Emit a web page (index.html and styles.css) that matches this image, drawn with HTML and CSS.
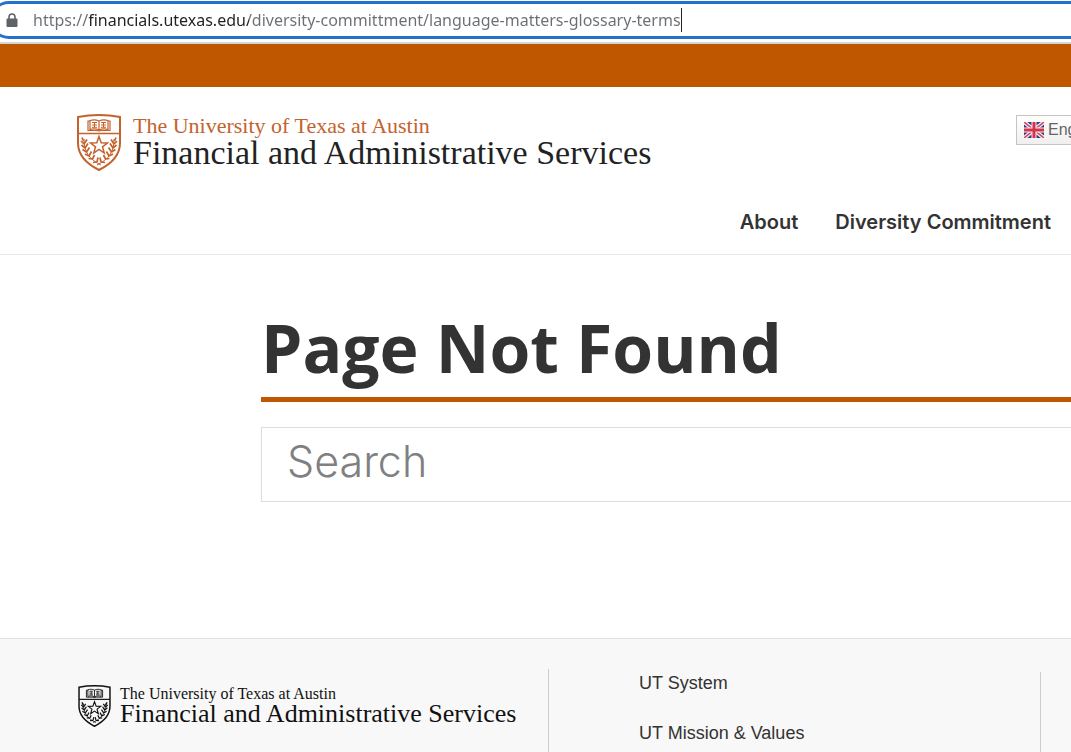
FILE: index.html
```html
<!DOCTYPE html>
<html lang="en">
<head>
<meta charset="utf-8">
<meta name="viewport" content="width=device-width, initial-scale=1">
<title>Page Not Found</title>
<link rel="stylesheet" href="styles.css">
</head>
<body>
<svg class="defs" aria-hidden="true">
  <symbol id="crest" viewBox="0 0 44 57">
    <g fill="none" stroke="currentColor">
      <path stroke-width="2" d="M1 3Q11 1 22 1T43 3V29C43 42 34 50 22 56C10 50 1 42 1 29Z"/>
      <path stroke-width="1.6" d="M1 19.5H43"/>
      <path stroke-width="1.2" d="M22 7C19 5.500 16 5.500 13 6.500V15.500C16 14.500 19 14.500 22 16C25 14.500 28 14.500 31 15.500V6.500C28 5.500 25 5.500 22 7V16M13 7H11V16.500H19L22 17L25 16.500H33V7H31"/>
      <path stroke-width="1" d="M15 8.500H20M15 11H20M15 13.300H20M24 8.500H29M24 11H29M24 13.300H29M17.500 8V13M26.500 8V13"/>
      <path stroke-width="1.500" d="M22 22.500L24.200 28.800L30.500 29L25.500 32.800L27.200 39L22 35.400L16.800 39L18.500 32.800L13.500 29L19.800 28.800Z"/>
      <path stroke-width="1" d="M7 25C7 38 12 45 24 51M37 25C37 38 32 45 20 51"/>
      <g stroke-width="1.700">
        <path d="M6.500 27L5 23.500M7 30L4 27M7 30L10 25.500M8 34L4.500 31M8 34L11 29.500M9.500 38L5.500 35.500M9.500 38L12.500 33.500M12 42L8 40M12 42L14.500 37.500M15.500 45L11.500 44.500M15.500 45L17.500 41M20 48L16 48.500M20 48L21 43.500"/>
        <path d="M37.500 27L39 23.500M37 30L40 27M37 30L34 25.500M36 34L39.500 31M36 34L33 29.500M34.500 38L38.500 35.500M34.500 38L31.500 33.500M32 42L36 40M32 42L29.500 37.500M28.500 45L32.500 44.500M28.500 45L26.500 41M24 48L28 48.500M24 48L23 43.500"/>
      </g>
    </g>
  </symbol>
</svg>

<div class="browser-bar">
  <div class="address">
    <svg class="lock" viewBox="0 0 12 15" aria-hidden="true"><path d="M3 6V4a3 3 0 0 1 6 0V6" fill="none" stroke="#5f6368" stroke-width="1.600"/><rect x=".5" y="5.500" width="11" height="8.500" rx="1" fill="#5f6368"/></svg>
    <input class="url" type="text" aria-label="Address" spellcheck="false" value="https://financials.utexas.edu/diversity-committment/language-matters-glossary-terms">
    <span class="caret"></span>
  </div>
</div>

<header class="header">
  <div class="brand-row">
    <a class="brand" href="#">
      <svg class="crest" aria-hidden="true"><use href="#crest"/></svg>
      <span class="brand-text">
        <span class="university">The University of Texas at Austin</span>
        <span class="department">Financial and Administrative Services</span>
      </span>
    </a>
    <button class="language" type="button">
      <svg class="flag" viewBox="0 0 20 16" aria-hidden="true">
        <path fill="#3a3c80" d="M0 0H20V16H0Z"/>
        <path stroke="#f4eef2" stroke-width="4" d="M0 0L20 16M20 0L0 16"/>
        <path stroke="#d3435b" stroke-width="1.500" d="M0 0L20 16M20 0L0 16"/>
        <path stroke="#f4eef2" stroke-width="5" d="M10 0V16M0 8H20"/>
        <path stroke="#d3334b" stroke-width="3" d="M10 0V16M0 8H20"/>
      </svg>
      <span>English</span>
    </button>
  </div>
  <nav class="nav" aria-label="Main">
    <a href="#">About</a>
    <a href="#">Diversity Commitment</a>
  </nav>
</header>

<main class="main">
  <h1 class="title">Page Not Found</h1>
  <input class="search" type="search" placeholder="Search" aria-label="Search">
</main>

<footer class="footer">
  <a class="brand brand-small" href="#">
    <svg class="crest" aria-hidden="true"><use href="#crest"/></svg>
    <span class="brand-text">
      <span class="university">The University of Texas at Austin</span>
      <span class="department">Financial and Administrative Services</span>
    </span>
  </a>
  <nav class="footer-links" aria-label="University">
    <a href="#">UT System</a>
    <a href="#">UT Mission &amp; Values</a>
  </nav>
  <div class="footer-end"></div>
</footer>
</body>
</html>
```
FILE: styles.css
```css
* {
  box-sizing: border-box;
}

body {
  margin: 0;
  min-height: 100vh;
  display: flex;
  flex-direction: column;
  overflow: hidden;
  background: #fff;
  color: #333;
  font-family: Inter, "Liberation Sans", sans-serif;
}

a {
  color: inherit;
  text-decoration: none;
}

.defs {
  display: none;
}

.browser-bar {
  padding: 1px 0 3px;
  border-bottom: 2px solid #d5d5d5;
}

.address {
  display: flex;
  align-items: center;
  height: 38px;
  margin-left: -10px;
  padding-left: 14px;
  border: solid #2472cf;
  border-width: 3px 0 3px 2px;
  border-radius: 19px 0 0 19px;
}

.lock {
  width: 12px;
  height: 15px;
}

.url {
  field-sizing: content;
  margin: 0 0 0 15px;
  padding: 0;
  border: 0;
  outline: 0;
  color: transparent;
  background: linear-gradient(90deg, #6b6f73 56px, #202124 56px, #202124 216px, #6b6f73 216px);
  background-clip: text;
  font: 16px/24px "Noto Sans", sans-serif;
}

.caret {
  width: 1px;
  height: 24px;
  background: #222;
}

.header {
  border-top: 43px solid #bf5700;
  border-bottom: 1px solid #e6e6e6;
}

.brand-row {
  display: flex;
  justify-content: space-between;
  align-items: flex-start;
  padding: 27px 0 0 77px;
}

.brand {
  display: flex;
  gap: 12px;
  color: #222;
  font-family: "Liberation Serif", serif;
  white-space: nowrap;
}

.crest {
  width: 44px;
  height: 57px;
  color: #c4622d;
}

.brand-text {
  display: flex;
  flex-direction: column;
}

.university {
  color: #c4622d;
  font-size: 22px;
  line-height: 24px;
}

.department {
  font-size: 34px;
  line-height: 30px;
}

.language {
  display: flex;
  align-items: center;
  gap: 4px;
  height: 30px;
  width: 120px;
  margin: 1px -65px 0 0;
  padding: 0 7px;
  border: 1px solid #c4c4c4;
  background: linear-gradient(#fff, #efefef);
  color: #666;
  font: 16px "Liberation Sans", sans-serif;
}

.flag {
  width: 20px;
  height: 16px;
}

.nav {
  display: flex;
  justify-content: flex-end;
  gap: 37px;
  padding: 37px 20px 17px 0;
  font-size: 20px;
  font-weight: 600;
  line-height: 29px;
}

.main {
  padding: 48px 0 136px 261px;
}

.title {
  margin: 0 0 25px;
  padding-bottom: 6px;
  border-bottom: 5px solid #bf5700;
  font: 700 66px/88px "Open Sans", sans-serif;
}

.search {
  display: block;
  width: 100%;
  height: 75px;
  padding: 0 25px 8px;
  border: 1px solid #ddd;
  border-right: 0;
  border-radius: 0;
  outline: 0;
  background: #fff;
  font: 300 43px Inter, sans-serif;
  appearance: none;
}

.search::placeholder {
  color: #808080;
}

.footer {
  flex: 1;
  display: grid;
  grid-template-columns: 549px 1fr 31px;
  border-top: 1px solid #e2e2e2;
  background: #f8f8f8;
}

.brand-small {
  gap: 9px;
  margin-top: 30px;
  padding: 16px 0 0 78px;
  border-right: 1px solid #ccc;
  color: #111;
}

.brand-small .crest {
  width: 33px;
  height: 42px;
  color: #111;
}

.brand-small .university {
  color: #111;
  font-size: 16px;
  line-height: 17px;
}

.brand-small .department {
  font-size: 26px;
  line-height: 24px;
}

.footer-links {
  display: flex;
  flex-direction: column;
  gap: 26px;
  padding: 32px 0 0 90px;
  font: 18px/24px "Liberation Sans", sans-serif;
}

.footer-end {
  margin-top: 33px;
  border-left: 1px solid #ccc;
}
```
